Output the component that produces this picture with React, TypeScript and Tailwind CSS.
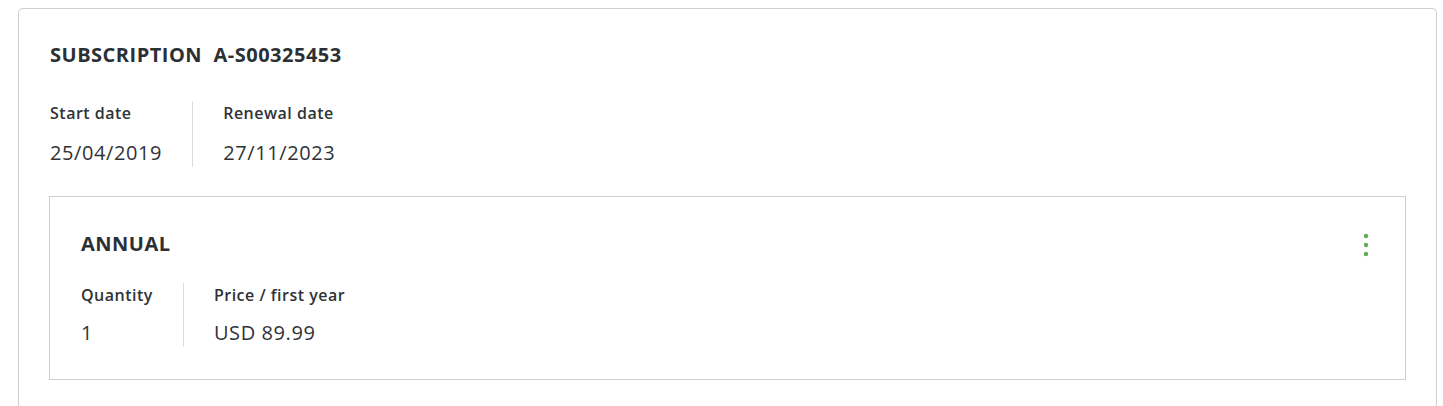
import React from "react";

function Field({ label, value, first, gap = "mt-[14px]" }: { label: string; value: string; first?: boolean; gap?: string }) {
  return (
    <div className={first ? "pr-[30px]" : "pl-[30px] border-l border-[#dcdcdc] pr-[30px]"}>
      <div className="text-[16px] leading-[24px] font-semibold text-[#2f3337] tracking-[0.5px]">{label}</div>
      <div className={`${gap} text-[20px] leading-[28px] text-[#2f3337] tracking-[0.6px]`}>{value}</div>
    </div>
  );
}

export default function App() {
  return (
    <div className="min-h-[406px] bg-white pt-[8px] pl-[18px] pr-[6px]" style={{ fontFamily: '"Open Sans", sans-serif' }}>
      <div className="border border-b-0 border-[#cfcfcf] rounded-t-[5px] pl-[31px] pr-[30px] pt-[32px] pb-[30px] min-h-[400px]">
        <h2 className="text-[20px] leading-[28px] font-bold text-[#2b3035] tracking-[0.5px]">
          SUBSCRIPTION&nbsp; A-S00325453
        </h2>
        <div className="mt-[32px] flex">
          <Field first label="Start date" value="25/04/2019" />
          <Field label="Renewal date" value="27/11/2023" />
        </div>
        <div className="-ml-[1px] mt-[29px] border border-[#cfcfcf] px-[31px] pt-[33px] pb-[32px] relative">
          <div className="flex items-start justify-between">
            <h3 className="text-[20px] leading-[28px] font-bold text-[#2b3035] tracking-[0.5px]">ANNUAL</h3>
            <button className="mr-[2px] mt-[1px] w-[12px] h-[28px] flex items-center justify-center" aria-label="More">
              <svg width="6" height="24" viewBox="0 0 6 24">
                <circle cx="3" cy="3" r="2.2" fill="#5fae52" />
                <circle cx="3" cy="12" r="2.2" fill="#5fae52" />
                <circle cx="3" cy="21" r="2.2" fill="#5fae52" />
              </svg>
            </button>
          </div>
          <div className="mt-[24px] flex">
            <Field first label="Quantity" value="1" gap="mt-[12px]" />
            <Field label="Price / first year" value="USD 89.99" gap="mt-[12px]" />
          </div>
        </div>
      </div>
    </div>
  );
}
